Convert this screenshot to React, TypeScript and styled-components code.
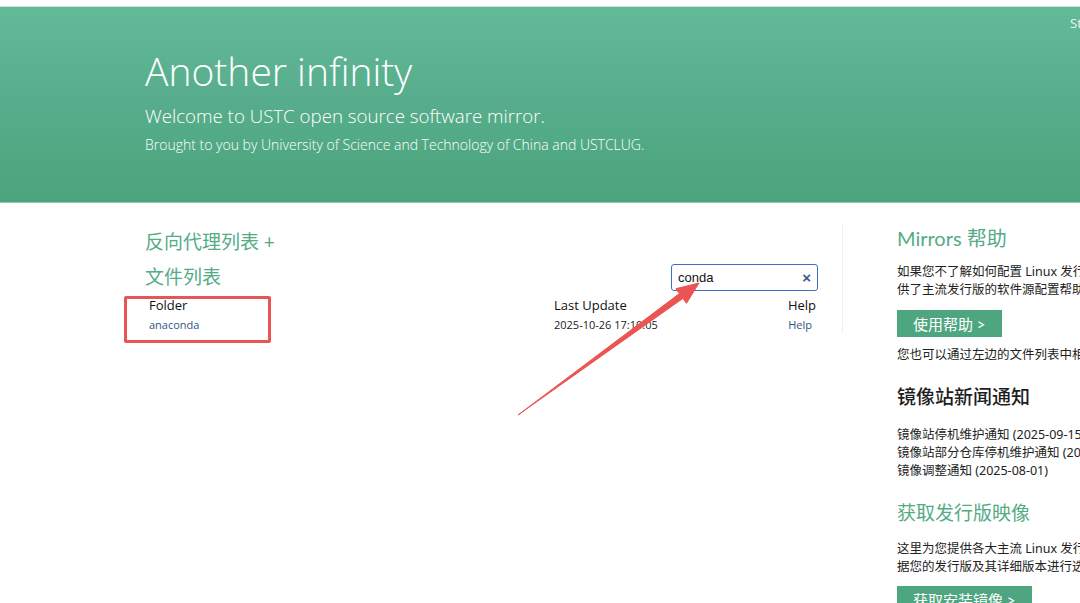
import React from 'react'
import styled, { createGlobalStyle } from 'styled-components'

const GlobalStyle = createGlobalStyle`
  html, body {
    margin: 0;
    padding: 0;
    background: #fff;
    overflow: hidden;
  }
  body {
    width: 1080px;
    height: 603px;
    font-family: 'Open Sans', 'Noto Sans CJK SC', sans-serif;
    color: #222;
  }
`

const CJK = `'Lato', 'Noto Sans CJK SC', sans-serif`
const BodyText = `'Noto Sans', 'Noto Sans CJK SC', sans-serif`

const Page = styled.div`
  position: relative;
  width: 1080px;
  height: 603px;
  overflow: hidden;
  padding-top: 6px;
  box-sizing: border-box;
`

const Banner = styled.header`
  position: relative;
  height: 197px;
  border-top: 1px solid #d8e4de;
  box-sizing: border-box;
  background: linear-gradient(180deg, #63ba98 0%, #57ad8b 50%, #4ba47c 100%);
  border-bottom: 1px solid #8fcab0;
  padding: 40px 0 0 145px;
  color: #fff;
`

const StatusLink = styled.span`
  position: absolute;
  top: 7px;
  left: 1070px;
  font-size: 13px;
  color: #eaf6f0;
`

const Title = styled.h1`
  margin: 0;
  font-weight: 300;
  font-size: 39px;
  line-height: 48px;
`

const Subtitle = styled.p<{ $size: number; $top: number }>`
  margin: ${(p) => p.$top}px 0 0;
  font-weight: 300;
  font-size: ${(p) => p.$size}px;
  line-height: ${(p) => Math.round(p.$size + 6)}px;
`

const Main = styled.main`
  display: flex;
  padding-left: 145px;
`

const LeftCol = styled.section`
  width: 673px;
  flex-shrink: 0;
  padding-top: 25px;
`

const Divider = styled.div`
  width: 1px;
  flex-shrink: 0;
  height: 108px;
  margin: 22px 0 0 24px;
  background: #eeeeee;
`

const RightCol = styled.aside`
  margin-left: 54px;
  width: 340px;
  flex-shrink: 0;
  padding-top: 21px;
  font-family: ${CJK};
  white-space: nowrap;
`

const GreenHeading = styled.h2<{ $top?: number; $size?: number }>`
  margin: ${(p) => p.$top ?? 0}px 0 0;
  font-family: ${CJK};
  font-weight: 400;
  font-size: ${(p) => p.$size ?? 19}px;
  line-height: 28px;
  color: #55ab86;
`

const HeadingRow = styled.div`
  display: flex;
  align-items: center;
  justify-content: space-between;
  margin-top: 7px;
`

const SearchBox = styled.label`
  display: flex;
  align-items: center;
  justify-content: space-between;
  width: 147px;
  height: 27px;
  box-sizing: border-box;
  border: 1.5px solid #3d6fc4;
  border-radius: 3px;
  padding: 0 6px;
  font-family: 'Liberation Sans', Arial, sans-serif;
  font-size: 13px;
  color: #111;
`

const ClearMark = styled.span`
  font-size: 15px;
  font-weight: 700;
  color: #3b5a8c;
  line-height: 1;
`

const Table = styled.div`
  margin-top: 5px;
  display: grid;
  grid-template-columns: 405px 1fr 80px;
`

const HeadCell = styled.div<{ $right?: boolean }>`
  padding: 0 ${(p) => (p.$right ? '2px' : '4px')} 0 4px;
  font-size: 13px;
  line-height: 19px;
  color: #111;
  text-align: ${(p) => (p.$right ? 'right' : 'left')};
`

const BodyCell = styled.div<{ $link?: boolean; $right?: boolean }>`
  padding: 0 ${(p) => (p.$right ? '6px' : '4px')} 0 4px;
  font-size: 11px;
  line-height: 19px;
  color: ${(p) => (p.$link ? '#2f5584' : '#222')};
  text-align: ${(p) => (p.$right ? 'right' : 'left')};
`

const Para = styled.p<{ $top?: number }>`
  margin: ${(p) => p.$top ?? 0}px 0 0;
  font-family: ${BodyText};
  font-size: 12.5px;
  line-height: 18px;
  color: #222;
`

const GreenButton = styled.div<{ $top: number }>`
  display: inline-flex;
  align-items: center;
  margin-top: ${(p) => p.$top}px;
  height: 27px;
  padding: 0 16px;
  background: #4ea680;
  color: #fff;
  font-size: 15px;
`

const DarkHeading = styled.h3`
  margin: 19px 0 0;
  font-weight: 500;
  font-size: 19px;
  line-height: 28px;
  color: #1e1e1e;
`

const NewsList = styled.div`
  margin-top: 15px;
`

const RedFrame = styled.div`
  position: absolute;
  left: 124px;
  top: 296px;
  width: 147px;
  height: 47px;
  box-sizing: border-box;
  border: 3px solid #e95454;
  border-radius: 2px;
`

const ArrowLayer = styled.svg`
  position: absolute;
  left: 0;
  top: 0;
  pointer-events: none;
`

const App: React.FC = () => {
  return (
    <>
      <GlobalStyle />
      <Page>
        <Banner>
          <StatusLink>St</StatusLink>
          <Title>Another infinity</Title>
          <Subtitle $size={18.7} $top={8}>
            Welcome to USTC open source software mirror.
          </Subtitle>
          <Subtitle $size={14} $top={7}>
            Brought to you by University of Science and Technology of China and USTCLUG.
          </Subtitle>
        </Banner>
        <Main>
          <LeftCol>
            <GreenHeading>反向代理列表 +</GreenHeading>
            <HeadingRow>
              <GreenHeading>文件列表</GreenHeading>
              <SearchBox>
                conda
                <ClearMark>×</ClearMark>
              </SearchBox>
            </HeadingRow>
            <Table>
              <HeadCell>Folder</HeadCell>
              <HeadCell>Last Update</HeadCell>
              <HeadCell $right>Help</HeadCell>
              <BodyCell $link>anaconda</BodyCell>
              <BodyCell>2025-10-26 17:10:05</BodyCell>
              <BodyCell $link $right>Help</BodyCell>
            </Table>
          </LeftCol>
          <Divider />
          <RightCol>
            <GreenHeading $size={20}>Mirrors 帮助</GreenHeading>
            <Para $top={11}>
              如果您不了解如何配置 Linux 发行版的软件源，我们为您提
              <br />
              供了主流发行版的软件源配置帮助。
            </Para>
            <GreenButton $top={11}>使用帮助 &gt;</GreenButton>
            <Para $top={9}>您也可以通过左边的文件列表中相应目录下的帮助链接获取</Para>
            <DarkHeading>镜像站新闻通知</DarkHeading>
            <NewsList>
              <Para>镜像站停机维护通知 (2025-09-15)</Para>
              <Para>镜像站部分仓库停机维护通知 (2025-08-20)</Para>
              <Para>镜像调整通知 (2025-08-01)</Para>
            </NewsList>
            <GreenHeading $top={19}>获取发行版映像</GreenHeading>
            <Para $top={13}>
              这里为您提供各大主流 Linux 发行版的安装镜像，请根
              <br />
              据您的发行版及其详细版本进行选择。
            </Para>
            <GreenButton $top={10}>获取安装镜像 &gt;</GreenButton>
          </RightCol>
        </Main>
        <RedFrame />
        <ArrowLayer width="1080" height="603" viewBox="0 0 1080 603">
          <polygon
            points="518,415 682.9,298.4 686.5,303.3 699,283 675.9,288.7 679.4,293.6"
            fill="#ec5353"
            stroke="#ec5353"
            strokeWidth="1"
            strokeLinejoin="round"
          />
        </ArrowLayer>
      </Page>
    </>
  )
}

export default App
